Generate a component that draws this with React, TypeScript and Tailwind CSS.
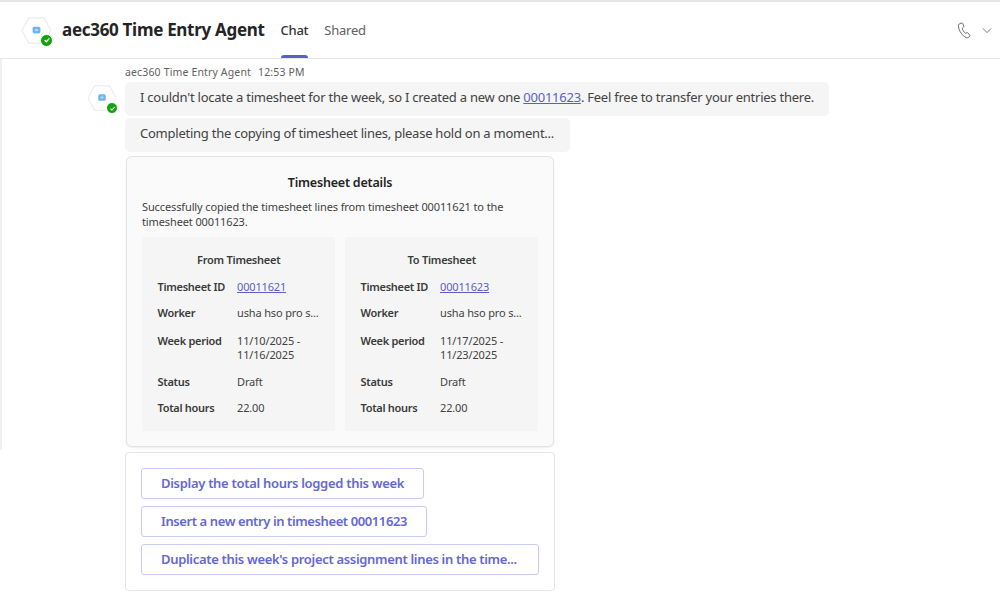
import React from "react";

function Hex({ size, badge }: { size: number; badge: number }) {
  return (
    <div className="relative shrink-0" style={{ width: size, height: size }}>
      <svg viewBox="0 0 32 28" width={size} height={size}>
        <polygon points="8,1 24,1 31,14 24,27 8,27 1,14" fill="#fff" stroke="#e6e6e6" strokeWidth="1" />
        <rect x="12" y="10" width="8" height="7" rx="1.8" fill="#6db5f5" />
        <rect x="14.5" y="12.5" width="3" height="2" fill="#c9d6e6" />
      </svg>
      <div className="absolute right-[-1px] bottom-[-1px] flex items-center justify-center rounded-full bg-[#13a10e] border border-white" style={{ width: badge, height: badge }}>
        <svg viewBox="0 0 10 10" width={badge - 5} height={badge - 5}>
          <path d="M2 5.2 L4.2 7.2 L8 3" fill="none" stroke="#fff" strokeWidth="1.6" />
        </svg>
      </div>
    </div>
  );
}

function Row({ label, value, link, tall }: { label: string; value: React.ReactNode; link?: boolean; tall?: boolean }) {
  return (
    <div className="flex">
      <div className={"w-[79.5px] shrink-0 font-semibold tracking-[-0.3px] text-[#3a3a3a] " + (tall ? "leading-[14px] pt-[3px]" : "")}>{label}</div>
      <div className={link ? "text-[#5b5fc7] underline" : tall ? "text-[#424242] leading-[14px] pt-[3px] pb-[2px]" : "text-[#424242]"}>{value}</div>
    </div>
  );
}

function Panel({ title, id, from, to }: { title: string; id: string; from: string; to: string }) {
  return (
    <div className="flex-1 bg-[#f5f5f5] pl-[15.5px] pr-[15px] pt-[15px] text-[11px] leading-[16px] tracking-[-0.15px]">
      <div className="text-center font-semibold tracking-[-0.25px] text-[#3a3a3a] mb-[11px]">{title}</div>
      <div className="flex flex-col gap-[10px]">
        <Row label="Timesheet ID" value={id} link />
        <Row label="Worker" value="usha hso pro s..." />
        <Row label="Week period" value={<>{from} -<br />{to}</>} tall />
        <Row label="Status" value="Draft" />
        <Row label="Total hours" value="22.00" />
      </div>
    </div>
  );
}

function Action({ children, className }: { children: React.ReactNode; className: string }) {
  return (
    <div className={"h-[31px] self-start rounded-[3px] border border-[#c8ccf5] pl-[19px] flex items-center text-[13px] font-semibold text-[#6468cf] " + className}>
      {children}
    </div>
  );
}

export default function App() {
  return (
    <div className="w-[1000px] h-[597px] bg-white overflow-hidden text-[#242424]" style={{ fontFamily: '"Noto Sans", "Open Sans", sans-serif' }}>
      <header className="h-[59px] border-t-2 border-b border-[#e6e6e6] flex items-center pl-[21px] pr-[8px]">
        <Hex size={31} badge={13} />
        <div className="ml-[10px] text-[17px] font-bold tracking-[-0.3px] text-[#242424]">aec360 Time Entry Agent</div>
        <div className="ml-[16px] h-full flex">
          <div className="relative h-full flex items-center pt-[1px] text-[13px] font-medium tracking-[-0.3px] text-[#333]">
            Chat
            <div className="absolute left-0 right-0 bottom-0 h-[3px] rounded-t-sm bg-[#5b5fc7]" />
          </div>
          <div className="ml-[16px] h-full flex items-center pt-[1px] text-[13px] tracking-[-0.2px] text-[#616161]">Shared</div>
        </div>
        <div className="ml-auto flex items-center gap-[10px] text-[#616161]">
          <svg viewBox="0 0 16 18" width="15" height="17" fill="none" stroke="#616161" strokeWidth="1">
            <path d="M3.2 1.6 L5 1 C5.6 .9 6 1.2 6.3 1.8 L7.2 4.2 C7.4 4.8 7.2 5.2 6.8 5.6 L5.7 6.6 C5.9 8.6 7.4 11 9.2 12 L10.6 11.4 C11.1 11.2 11.6 11.3 11.9 11.8 L13.5 13.9 C13.9 14.4 13.8 14.9 13.4 15.3 L12.2 16.3 C11.6 16.8 10.8 16.9 10 16.6 C5.8 15.2 1.9 9.2 1.5 4.4 C1.4 3.1 2 2 3.2 1.6 Z" />
          </svg>
          <svg viewBox="0 0 12 8" width="10" height="7" fill="none" stroke="#616161" strokeWidth="1">
            <path d="M1 1.5 L6 6.5 L11 1.5" />
          </svg>
        </div>
      </header>

      <main className="flex">
        <div className="w-[125px] shrink-0 h-[391px] border-l-2 border-[#f0f0f0] flex justify-end pr-[8px] pt-[24px]">
          <Hex size={30} badge={12} />
        </div>
        <div className="flex-1">
          <div className="h-[23px] flex items-center text-[10.5px] text-[#616161] tracking-[0.15px] gap-[7px] pt-[4px]">
            <span>aec360 Time Entry Agent</span>
            <span>12:53 PM</span>
          </div>
          <div className="flex flex-col gap-[2px] items-start text-[13px] tracking-[-0.24px] text-[#424242]">
            <div className="h-[34px] w-[704px] flex items-center rounded-[5px] bg-[#f5f5f5] pl-[15px] pb-[2px]">
              <span className="whitespace-nowrap">I couldn't locate a timesheet for the week, so I created a new one <span className="text-[#5b5fc7] underline">00011623</span>. Feel free to transfer your entries there.</span>
            </div>
            <div className="h-[34px] w-[445px] flex items-center rounded-[5px] bg-[#f5f5f5] pl-[15px] pb-[2px] whitespace-nowrap">
              Completing the copying of timesheet lines, please hold on a moment...
            </div>
          </div>
          <div className="mt-[4px] w-[428px] h-[291px] ml-[1px] rounded-[6px] border border-[#e3e3e3] bg-[#fafafa] shadow-[0_1px_2px_rgba(0,0,0,0.08)] px-[15px] pt-[16px]">
            <div className="text-center text-[12.5px] font-semibold tracking-[-0.2px] text-[#242424] leading-[20px]">Timesheet details</div>
            <p className="mt-[6px] text-[11px] leading-[15px] tracking-[-0.12px] text-[#424242]">
              Successfully copied the timesheet lines from timesheet 00011621 to the timesheet 00011623.
            </p>
            <div className="mt-[8px] flex gap-[10px] h-[194px]">
              <Panel title="From Timesheet" id="00011621" from="11/10/2025" to="11/16/2025" />
              <Panel title="To Timesheet" id="00011623" from="11/17/2025" to="11/23/2025" />
            </div>
          </div>
          <div className="mt-[5px] w-[430px] h-[139px] rounded-[4px] border border-[#e6e6e6] bg-white pl-[15px] pt-[15px] flex flex-col gap-[7px]">
            <Action className="w-[283px] tracking-[-0.3px]">Display the total hours logged this week</Action>
            <Action className="w-[286px] tracking-[-0.4px]">Insert a new entry in timesheet 00011623</Action>
            <Action className="w-[398px] tracking-[-0.32px]">Duplicate this week's project assignment lines in the time...</Action>
          </div>
        </div>
      </main>
    </div>
  );
}
